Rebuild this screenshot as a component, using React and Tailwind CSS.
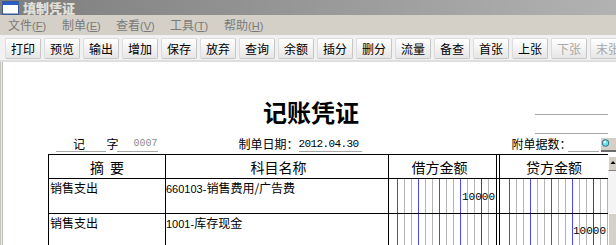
import React from "react";

const debitLines = Array.from({ length: 14 }, (_, k) => k);
const creditLines = Array.from({ length: 15 }, (_, k) => k);

function lineColor(k) {
  if (k === 12) return "bg-[#ff0000]";
  if (k % 3 === 0) return "bg-[#4848ff]";
  return "bg-[#b4b4b4]";
}

function Grid({ lead, lines }) {
  return (
    <div className="flex h-full">
      <div className={lead === 8 ? "w-[8px] shrink-0" : "w-[9px] shrink-0"} />
      {lines.map((k) => (
        <React.Fragment key={k}>
          <div className={`w-px h-full shrink-0 ${lineColor(k)}`} />
          {k !== lines.length - 1 && <div className="w-[6px] shrink-0" />}
        </React.Fragment>
      ))}
    </div>
  );
}

const tools = [
  ["打印", false], ["预览", false], ["输出", false], ["增加", false],
  ["保存", false], ["放弃", false], ["查询", false], ["余额", false],
  ["插分", false], ["删分", false], ["流量", false], ["备查", false],
  ["首张", false], ["上张", false], ["下张", true], ["末张", true],
];

const menus = [
  ["文件", "F"], ["制单", "E"], ["查看", "V"], ["工具", "T"], ["帮助", "H"],
];

const mono = "font-['Liberation_Mono',monospace]";
const lat = "font-['Liberation_Sans',sans-serif]";

export default function App() {
  return (
    <div className="w-[616px] h-[245px] overflow-hidden bg-white text-black font-['Noto_Sans_CJK_SC',sans-serif] flex flex-col">
      {/* Title bar */}
      <div className="h-[15px] shrink-0 flex items-center bg-linear-to-r from-[#7e7e7e] to-[#b2b2b2]">
        <svg width="17" height="14" viewBox="0 0 17 14" className="ml-[2px] shrink-0">
          <rect x="0.5" y="0.5" width="16" height="13" fill="#ffffff" stroke="#3a5a9a" />
          <rect x="1" y="1" width="15" height="3" fill="#2a5cc8" />
          <rect x="1" y="12" width="15" height="1" fill="#9aa8c8" />
        </svg>
        <span className="ml-[4px] text-[13px] leading-[14px] font-black text-[#e2e0da] whitespace-nowrap">填制凭证</span>
      </div>

      {/* Menu bar */}
      <div className="h-[20px] shrink-0 bg-[#d4d0c8] flex items-center pl-[8px] text-[12px] leading-[14px] text-[#7a7a7a]">
        {menus.map(([t, k]) => (
          <div key={t} className="w-[54px] shrink-0 whitespace-nowrap">
            {t}
            <span className={`${lat} text-[11px]`}>
              (<span className="underline">{k}</span>)
            </span>
          </div>
        ))}
      </div>

      {/* Toolbar */}
      <div className="h-[25px] shrink-0 bg-[#f1f1f1] flex items-start pt-[3px] pl-[5px] gap-[3px]">
        {tools.map(([t, dis]) => (
          <div
            key={t}
            className={`w-[36px] h-[21px] shrink-0 flex items-center justify-center text-[12px] leading-none rounded-[2px] border border-[#dcdcdc] border-b-[#c6c6c6] border-r-[#c6c6c6] bg-linear-to-b from-[#ffffff] to-[#e6e6e6] ${dis ? "text-[#a8a8a8]" : "text-black"}`}
          >
            {t}
          </div>
        ))}
      </div>
      <div className="h-[2px] shrink-0 bg-[#dedede]" />

      {/* Document */}
      <div className="flex-1 flex min-h-0">
        <div className="w-[3px] shrink-0 flex">
          <div className="w-px bg-[#c8c4bc]" />
          <div className="w-px bg-[#eeeeee]" />
          <div className="w-px bg-[#bcbcbc]" />
        </div>

        <div className="flex-1 flex flex-col min-w-0">
          {/* Title row */}
          <div className="h-[75px] shrink-0 flex">
            <div className="ml-[260px] mt-[38px] h-[24px] text-[24px] leading-[24px] font-bold whitespace-nowrap">
              记账凭证
            </div>
            <div className="ml-auto mr-[8px] w-[73px] mt-[52px] flex flex-col">
              <div className="h-px bg-[#a8a8a8]" />
              <div className="h-px bg-[#a8a8a8] mt-[18px]" />
            </div>
          </div>

          {/* Info row */}
          <div className="h-[15px] shrink-0 flex text-[12px] leading-[14px]">
            <div className="ml-[53px] w-[52px] h-[15px] border-b border-[#a8a8a8] pl-[17px]">记</div>
            <div className="w-[11px] h-[15px]">字</div>
            <div className={`w-[42px] h-[15px] border-b border-[#a8a8a8] text-right text-[10px] leading-[14px] text-[#8a8a8a] ${mono}`}>
              0007
            </div>
            <div className="ml-[81px] w-[60px] h-[15px] whitespace-nowrap">制单日期：</div>
            <div className={`w-[67px] h-[15px] border-b border-[#a8a8a8] text-[11px] leading-[14px] tracking-[-0.6px] ${mono}`}>
              2012.04.30
            </div>
            <div className="ml-[149px] w-[57px] h-[15px] whitespace-nowrap overflow-visible">附单据数：</div>
            <div className="w-[32px] h-[15px] border-b border-[#a8a8a8]" />
            <div className="ml-[1px] w-[16px] h-[15px] shrink-0 bg-[#d4d0c8] border-t border-l border-white">
              <svg width="15" height="14" viewBox="0 0 15 14">
                <circle cx="4.5" cy="5" r="3.3" fill="#5fe8f0" stroke="#3a6a88" strokeWidth="1" />
                <circle cx="3.8" cy="4.2" r="1.1" fill="#ffffff" />
                <rect x="0" y="12" width="15" height="2" fill="#6a6a6a" />
              </svg>
            </div>
          </div>

          {/* Table + scrollbar */}
          <div className="mt-[2px] flex-1 flex items-stretch min-h-0">
            <div className="ml-[45px] w-[560px] shrink-0 flex flex-col border-l border-t border-black">
              {/* Header */}
              <div className="h-[24px] shrink-0 flex border-b border-black text-[14px] leading-[16px]">
                <div className="w-[117px] shrink-0 border-r border-black flex items-center justify-center">
                  <span className="[word-spacing:3px]">摘 要</span>
                </div>
                <div className="w-[223px] shrink-0 border-r border-black flex items-center justify-center pl-[3px]">
                  科目名称
                </div>
                <div className="w-[108px] shrink-0 border-r border-black flex items-center justify-center pr-[6px]">
                  借方金额
                </div>
                <div className="w-[2px] shrink-0" />
                <div className="w-[109px] shrink-0 border-l border-black flex items-center justify-center">
                  贷方金额
                </div>
              </div>

              {/* Row 1 */}
              <div className="h-[35px] shrink-0 flex border-b border-black text-[12px] leading-[14px]">
                <div className="w-[117px] shrink-0 border-r border-black pl-[1px] pt-[2px]">销售支出</div>
                <div className="w-[223px] shrink-0 border-r border-black pt-[2px] whitespace-nowrap">
                  <span className={`${lat} text-[11px]`}>660103-</span>销售费用/广告费
                </div>
                <div className="w-[108px] shrink-0 border-r border-black relative">
                  <Grid lead={8} lines={debitLines} />
                  <div className={`absolute right-[1px] top-[12px] text-[11px] leading-[12px] ${mono}`}>
                    10000
                  </div>
                </div>
                <div className="w-[2px] shrink-0" />
                <div className="w-[109px] shrink-0 border-l border-black">
                  <Grid lead={9} lines={creditLines} />
                </div>
              </div>

              {/* Row 2 */}
              <div className="flex-1 flex text-[12px] leading-[14px]">
                <div className="w-[117px] shrink-0 border-r border-black pl-[1px] pt-[2px]">销售支出</div>
                <div className="w-[223px] shrink-0 border-r border-black pt-[2px] whitespace-nowrap">
                  <span className={`${lat} text-[11px]`}>1001-</span>库存现金
                </div>
                <div className="w-[108px] shrink-0 border-r border-black">
                  <Grid lead={8} lines={debitLines} />
                </div>
                <div className="w-[2px] shrink-0" />
                <div className="w-[109px] shrink-0 border-l border-black relative">
                  <Grid lead={9} lines={creditLines} />
                  <div className={`absolute right-[2px] top-[11px] text-[11px] leading-[12px] ${mono}`}>
                    10000
                  </div>
                </div>
              </div>
            </div>

            {/* Scrollbar */}
            <div className="w-[16px] shrink-0 flex flex-col pt-[2px]">
              <div className="h-[15px] shrink-0 bg-[#d4d0c8] border-t border-l border-white border-b border-b-[#808080]">
                <svg width="14" height="13" viewBox="0 0 14 13">
                  <polygon points="1.5,7 4,4 6.5,7" fill="#000000" />
                </svg>
              </div>
              <div className="h-[42px] shrink-0 bg-[#f4f4f4]" />
              <div className="flex-1 bg-[#d4d0c8] border-t border-l border-white" />
            </div>
          </div>
        </div>
      </div>
    </div>
  );
}
